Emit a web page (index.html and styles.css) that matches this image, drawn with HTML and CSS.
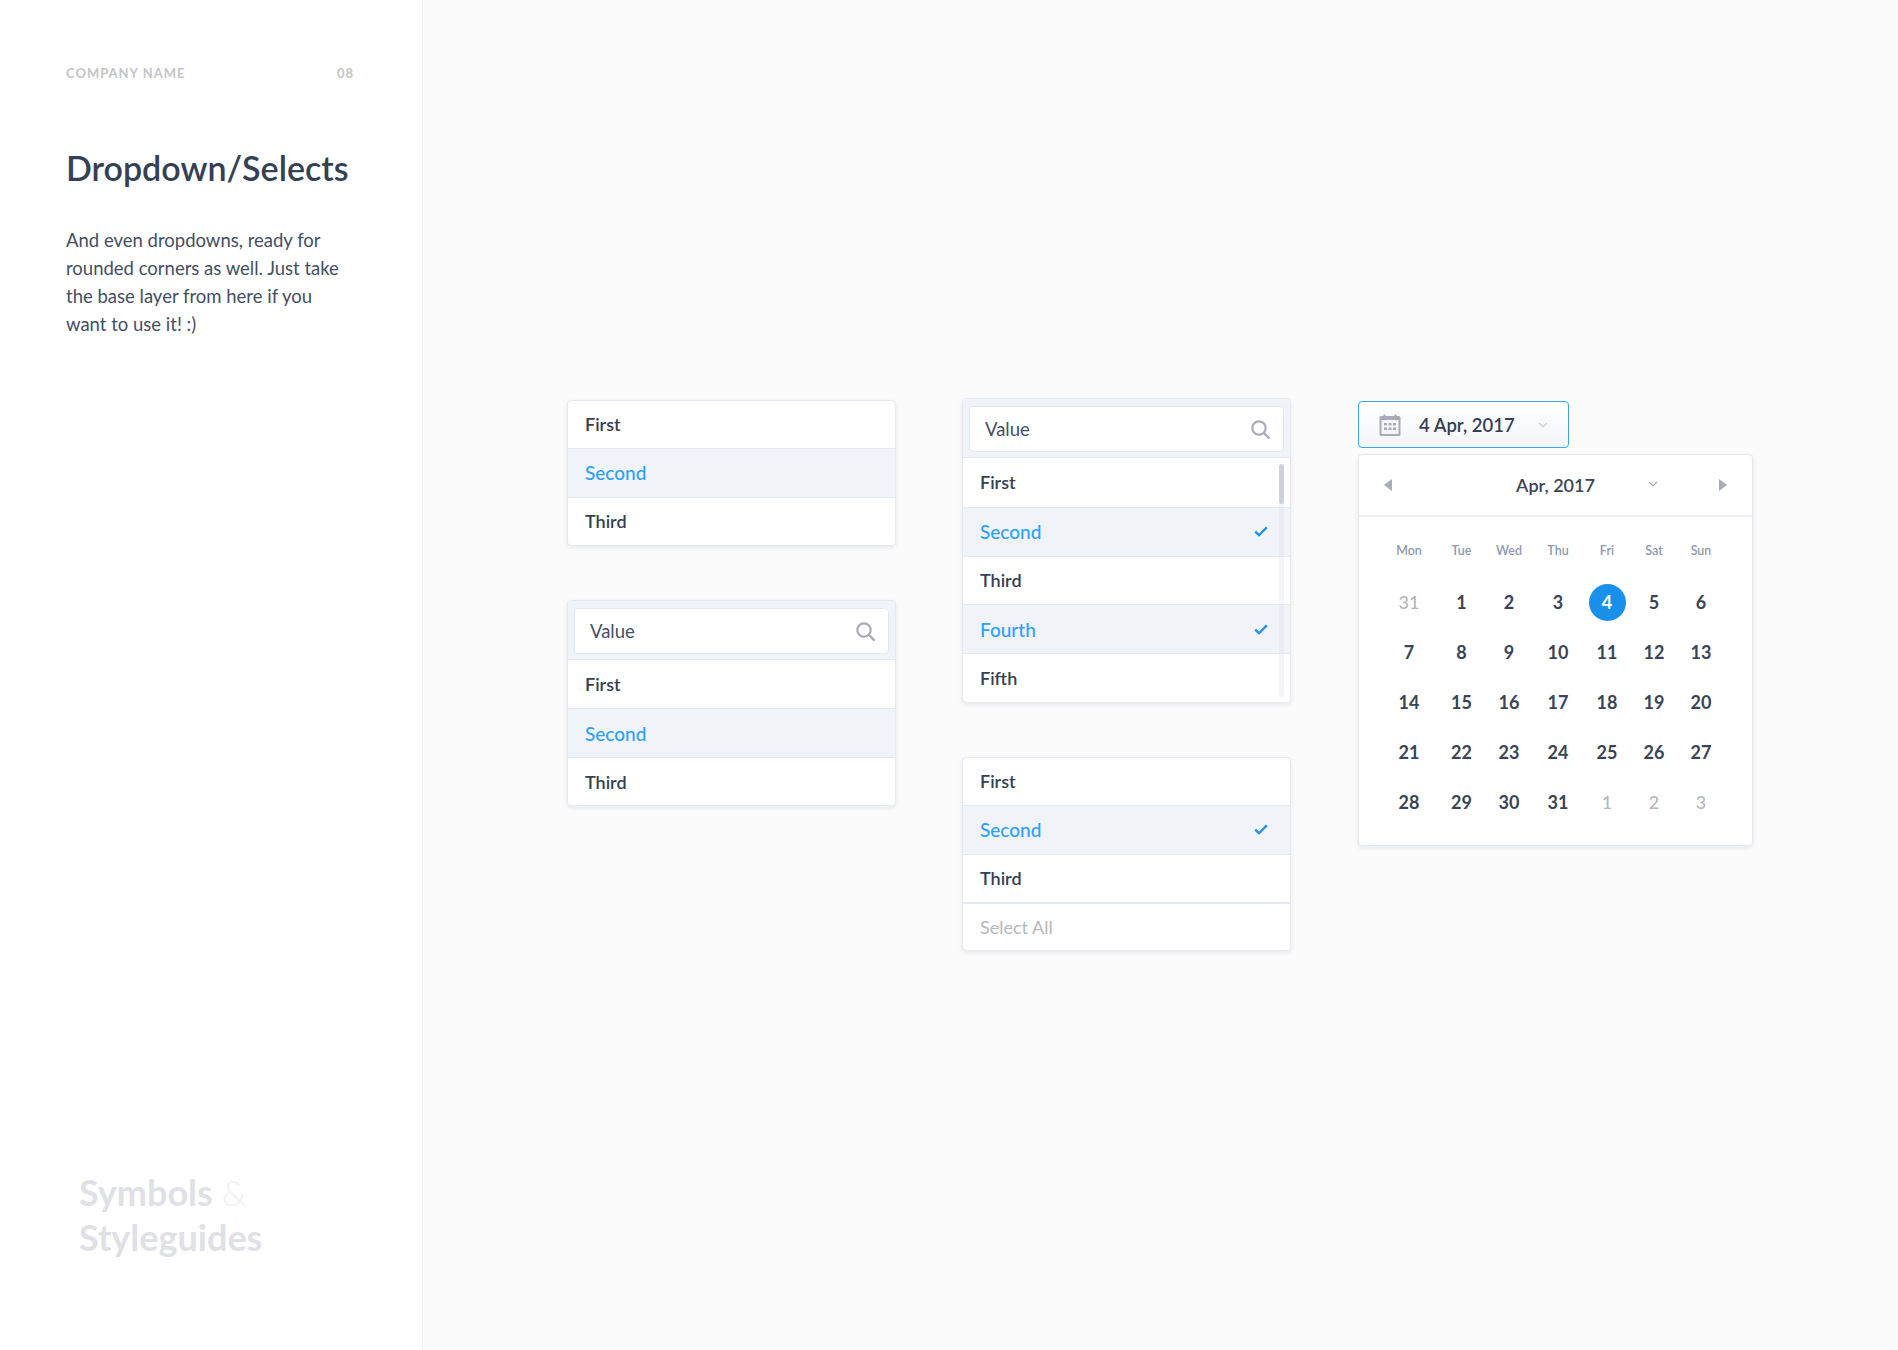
FILE: index.html
```html
<!DOCTYPE html>
<html lang="en">
<head>
<meta charset="utf-8">
<title>Dropdown/Selects</title>
<link rel="stylesheet" href="styles.css">
</head>
<body>
<div class="page">
  <aside class="sidebar">
    <div class="top"><span>COMPANY NAME</span><span>08</span></div>
    <h1>Dropdown/Selects</h1>
    <p class="desc">And even dropdowns, ready for<br>rounded corners as well. Just take<br>the base layer from here if you<br>want to use it! :)</p>
    <div class="brand">Symbols <span class="amp">&amp;</span><br>Styleguides</div>
  </aside>
  <main class="main">
    <div class="col col-a">
      <div class="card plain">
        <div class="row">First</div>
        <div class="row sel">Second</div>
        <div class="row">Third</div>
      </div>
      <div class="card">
        <div class="search"><div class="input"><span>Value</span>
          <svg class="mag" width="19" height="19" viewBox="0 0 19 19"><circle cx="8" cy="8" r="6.7" fill="none" stroke="#a8abb8" stroke-width="2.2"/><path d="M13 13 17.8 17.8" stroke="#a8abb8" stroke-width="2.4" stroke-linecap="round"/></svg></div></div>
        <div class="row first">First</div>
        <div class="row sel">Second</div>
        <div class="row">Third</div>
      </div>
    </div>
    <div class="col col-b">
      <div class="card scroll">
        <div class="search"><div class="input"><span>Value</span>
          <svg class="mag" width="19" height="19" viewBox="0 0 19 19"><circle cx="8" cy="8" r="6.7" fill="none" stroke="#a8abb8" stroke-width="2.2"/><path d="M13 13 17.8 17.8" stroke="#a8abb8" stroke-width="2.4" stroke-linecap="round"/></svg></div></div>
        <div class="row first">First</div>
        <div class="row sel">Second<svg class="check" width="14" height="11" viewBox="0 0 14 11"><path d="M1.2 5.6 5 9.2 12.8 1.4" fill="none" stroke="#1d92ea" stroke-width="2.3"/></svg></div>
        <div class="row">Third</div>
        <div class="row sel">Fourth<svg class="check" width="14" height="11" viewBox="0 0 14 11"><path d="M1.2 5.6 5 9.2 12.8 1.4" fill="none" stroke="#1d92ea" stroke-width="2.3"/></svg></div>
        <div class="row">Fifth</div>
        <div class="track"><div class="thumb"></div></div>
      </div>
      <div class="card">
        <div class="row">First</div>
        <div class="row sel">Second<svg class="check" width="14" height="11" viewBox="0 0 14 11"><path d="M1.2 5.6 5 9.2 12.8 1.4" fill="none" stroke="#1d92ea" stroke-width="2.3"/></svg></div>
        <div class="row">Third</div>
        <div class="row all">Select All</div>
      </div>
    </div>
    <div class="col col-c">
      <div class="datebtn">
        <svg class="cal" width="22" height="22" viewBox="0 0 22 22"><path fill="#a8abb8" d="M2 2h2.5V0.5h2V2h9V0.5h2V2H20a1.5 1.5 0 0 1 1.5 1.5v17A1.5 1.5 0 0 1 20 22H2a1.5 1.5 0 0 1-1.5-1.5v-17A1.5 1.5 0 0 1 2 2Z"/><rect x="2.5" y="6" width="17" height="14" fill="#f4f6fa"/><g fill="#a8abb8"><rect x="5" y="9" width="3" height="2.5"/><rect x="9.5" y="9" width="3" height="2.5"/><rect x="14" y="9" width="3" height="2.5"/><rect x="5" y="13.5" width="3" height="2.5"/><rect x="9.5" y="13.5" width="3" height="2.5"/><rect x="14" y="13.5" width="3" height="2.5"/></g></svg>
        <span class="dateval">4 Apr, 2017</span>
        <svg class="chev" width="10" height="6" viewBox="0 0 10 6"><path d="M1 1 5 5 9 1" fill="none" stroke="#c9cdd8" stroke-width="1.2"/></svg>
      </div>
      <div class="calendar">
        <div class="calhead">
          <svg width="8" height="12" viewBox="0 0 8 12"><path d="M8 0V12L0 6Z" fill="#a8abb8"/></svg>
          <div class="month"><span>Apr, 2017</span><svg class="chev2" width="10" height="6" viewBox="0 0 10 6"><path d="M1 1 5 5 9 1" fill="none" stroke="#a8abb8" stroke-width="1.2"/></svg></div>
          <svg width="8" height="12" viewBox="0 0 8 12"><path d="M0 0V12L8 6Z" fill="#a8abb8"/></svg>
        </div>
        <div class="grid">
          <div class="wd">Mon</div><div class="wd">Tue</div><div class="wd">Wed</div><div class="wd">Thu</div><div class="wd">Fri</div><div class="wd">Sat</div><div class="wd">Sun</div>
          <div class="d off">31</div><div class="d">1</div><div class="d">2</div><div class="d">3</div><div class="d"><span class="today">4</span></div><div class="d">5</div><div class="d">6</div>
          <div class="d">7</div><div class="d">8</div><div class="d">9</div><div class="d">10</div><div class="d">11</div><div class="d">12</div><div class="d">13</div>
          <div class="d">14</div><div class="d">15</div><div class="d">16</div><div class="d">17</div><div class="d">18</div><div class="d">19</div><div class="d">20</div>
          <div class="d">21</div><div class="d">22</div><div class="d">23</div><div class="d">24</div><div class="d">25</div><div class="d">26</div><div class="d">27</div>
          <div class="d">28</div><div class="d">29</div><div class="d">30</div><div class="d">31</div><div class="d off">1</div><div class="d off">2</div><div class="d off">3</div>
        </div>
      </div>
    </div>
  </main>
</div>
</body>
</html>
```

FILE: styles.css
```css
* { box-sizing: border-box; }
html, body { margin: 0; padding: 0; }
body { font-family: "Lato", "Liberation Sans", sans-serif; color: #354052; background: #fbfbfc; }
.page { display: flex; width: 1898px; height: 1350px; overflow: hidden; }

.sidebar { width: 423px; flex: none; background: #fff; border-right: 1px solid #eff0f2; padding: 65px 0 0 66px; display: flex; flex-direction: column; }
.top { width: 288px; display: flex; justify-content: space-between; font-size: 13px; line-height: 16px; font-weight: 700; letter-spacing: 1px; color: #c4c5c7; }
h1 { margin: 65px 0 0; font-size: 34px; line-height: 44px; font-weight: 600; color: #354052; }
.desc { margin: 37px 0 0; font-size: 18.5px; line-height: 27.9px; color: #454f62; }
.brand { margin: auto 0 0 13px; padding-bottom: 90px; font-size: 36px; line-height: 45px; font-weight: 700; color: #dfe1e6; }
.amp { font-weight: 300; color: #eff1f3; }

.main { flex: 1; display: flex; align-items: flex-start; padding: 398px 0 0 144px; }
.col { display: flex; flex-direction: column; width: 329px; margin-right: 66px; }
.col-a { padding-top: 2px; gap: 54px; }
.col-b { gap: 54px; margin-right: 67px; }
.col-c { width: auto; margin: 3px 0 0; }

.card { position: relative; background: #fff; border: 1px solid #e6e9ef; border-radius: 4px; box-shadow: 0 2px 4px rgba(60,70,90,.1); overflow: hidden; }
.row { height: 48px; display: flex; align-items: center; justify-content: space-between; padding: 0 22px 0 17px; font-size: 18px; font-weight: 600; color: #354052; border-top: 1px solid #e6e9ef; }
.row:first-child { height: 47px; border-top: 0; }
.row.first { border-top: 0; }
.row.sel { height: 49px; background: #f0f3f8; color: #2ea1f8; font-size: 19px; font-weight: 500; }
.row.all { color: #b5b7ba; font-weight: 400; border-top: 2px solid #e6e9ef; }
.plain .row { padding-bottom: 2px; }

.search { height: 59px; padding: 7px 6px 6px; background: #f0f3f8; border-bottom: 1px solid #e6e9ef; }
.input { height: 46px; display: flex; align-items: center; justify-content: space-between; padding: 0 13px 0 15px; background: #fff; border: 1px solid #e4e7ee; border-radius: 4px; font-size: 18.5px; color: #454f62; }
.mag { flex: none; }

.scroll .row, .scroll .row.sel { height: 48.8px; }
.track { position: absolute; top: 65px; right: 6px; width: 5px; bottom: 5px; background: rgba(222,226,234,.35); border-radius: 3px; }
.thumb { width: 5px; height: 40px; background: #cfd2da; border-radius: 3px; }

.datebtn { width: 211px; height: 47px; display: flex; align-items: center; padding: 0 20px; background: linear-gradient(#fff, #f3f5f9); border: 1px solid #3da5f4; border-radius: 4px; font-size: 18.5px; font-weight: 600; color: #354052; }
.cal { flex: none; }
.dateval { margin-left: 18px; white-space: nowrap; }
.chev { margin-left: auto; flex: none; }

.calendar { width: 395px; height: 392px; margin-top: 6px; background: #fff; border: 1px solid #e6e9ef; border-radius: 4px; box-shadow: 0 2px 4px rgba(60,70,90,.1); }
.calhead { height: 62px; display: flex; align-items: center; justify-content: space-between; padding: 0 25px; border-bottom: 2px solid #f0f2f5; }
.month { position: relative; font-size: 18px; font-weight: 600; color: #3a4456; }
.chev2 { position: absolute; left: 132px; top: 7px; }

.grid { display: grid; grid-template-columns: 48px 57px 38px 60px 38px 56px 38px; grid-template-rows: 39px repeat(5, 50px); padding: 21px 0 0 26px; align-items: center; justify-items: center; }
.wd { align-self: start; font-size: 12.5px; line-height: 26px; font-weight: 600; color: #8e99ae; }
.d { font-size: 18px; font-weight: 700; color: #3a4456; display: flex; align-items: center; justify-content: center; height: 38px; width: 38px; }
.d.off { color: #b5b7ba; font-weight: 500; }
.today { width: 37px; height: 37px; border-radius: 50%; background: #1991eb; color: #fff; display: flex; align-items: center; justify-content: center; }
```
